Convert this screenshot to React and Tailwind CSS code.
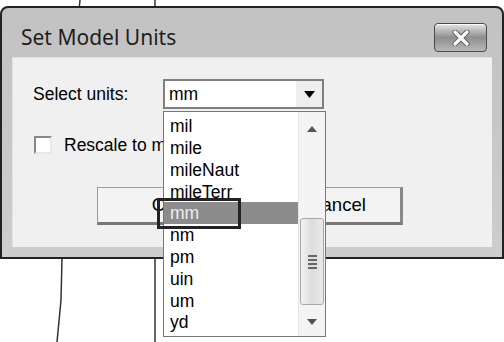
import React from 'react';

const units = ['mil', 'mile', 'mileNaut', 'mileTerr', 'mm', 'nm', 'pm', 'uin', 'um', 'yd'];

const CloseButton = () => (
  <button
    type="button"
    className="mr-[15px] mt-[15px] flex h-[29px] w-[53px] items-center justify-center rounded-[4px] border border-[#4a4a4a] bg-gradient-to-b from-[#e6e6e6] via-[#8e8e8e] to-[#b8b8b8] shadow-[inset_0_1px_0_#fff]"
  >
    <svg width="20" height="16" viewBox="0 0 20 16">
      <path d="M4 2 L16 14 M16 2 L4 14" stroke="#555" strokeWidth="5" strokeLinecap="round" />
      <path d="M4 2 L16 14 M16 2 L4 14" stroke="#fff" strokeWidth="3.2" strokeLinecap="round" />
    </svg>
  </button>
);

const DropList = () => (
  <div className="absolute left-[163px] top-[111px] flex h-[226px] w-[163px] border border-[#777] bg-white font-['Liberation_Sans',sans-serif] text-[17.5px] text-black">
    <ul className="w-[134px] pt-[3px]">
      {units.map(u => (
        <li
          key={u}
          className={
            u === 'mm'
              ? 'flex h-[21.8px] items-center bg-[#8c8c8c] pl-[6px] pt-[2px] leading-none text-[#eee]'
              : 'flex h-[21.8px] items-center pl-[6px] pt-[2px] leading-none'
          }
        >
          {u}
        </li>
      ))}
    </ul>
    <div className="flex w-[27px] flex-col border-l border-[#e4e4e4] bg-[#f4f4f4]">
      <div className="flex h-[30px] items-center justify-center pt-[4px]">
        <svg width="10" height="6" viewBox="0 0 10 6">
          <path d="M0 6 L5 0 L10 6 Z" fill="#555" />
        </svg>
      </div>
      <div className="h-[76px]" />
      <div className="mx-[1px] flex h-[87px] flex-col items-center justify-center gap-[2px] rounded-[3px] border border-[#a8a8a8] bg-gradient-to-r from-[#f2f2f2] via-[#dcdcdc] to-[#eaeaea]">
        <span className="h-[2px] w-[9px] bg-[#666]" />
        <span className="h-[2px] w-[9px] bg-[#666]" />
        <span className="h-[2px] w-[9px] bg-[#666]" />
        <span className="h-[2px] w-[9px] bg-[#666]" />
      </div>
      <div className="flex flex-1 items-center justify-center pt-[3px]">
        <svg width="10" height="6" viewBox="0 0 10 6">
          <path d="M0 0 L10 0 L5 6 Z" fill="#555" />
        </svg>
      </div>
    </div>
  </div>
);

export default function App() {
  return (
    <div className="relative h-[342px] w-[504px] overflow-hidden bg-white">
      <svg className="absolute inset-0" width="504" height="342">
        <path d="M80 0 L74 60 L62 258 L61 300 L57 342" stroke="#333" strokeWidth="1.5" fill="none" />
        <path d="M155 0 L155 342" stroke="#333" strokeWidth="1.5" />
      </svg>

      <div className="relative mt-[6px] h-[253px] w-[504px] rounded-t-[8px] border-2 border-[#222] bg-gradient-to-b from-[#c2c2c2] to-[#cdcdcd]">
        <div className="flex h-[49px] items-start justify-between">
          <h1 className="pl-[19px] pt-[19px] font-['Noto_Sans',sans-serif] text-[21px] leading-none text-[#1e1e1e]">
            Set Model Units
          </h1>
          <CloseButton />
        </div>

        <div className="mx-[10px] h-[190px] border-l border-t border-[#e2e2e2] bg-[#f0f0f0] pl-[20px] pt-[21px] font-['Liberation_Sans',sans-serif] text-[17.5px] text-black">
          <div className="flex h-[30px] items-center">
            <span className="w-[130px]">Select units:</span>
            <div className="flex h-[30px] w-[161px] items-center border-2 border-[#808080] bg-white">
              <span className="flex-1 pl-[4px]">mm</span>
              <span className="flex h-[26px] w-[26px] items-center justify-center bg-[#eeeeee]">
                <svg width="11" height="7" viewBox="0 0 11 7">
                  <path d="M0 0 L11 0 L5.5 7 Z" fill="#000" />
                </svg>
              </span>
            </div>
          </div>

          <div className="mt-[27px] flex h-[18px] items-center gap-[12px] pl-px">
            <span className="h-[18px] w-[18px] shrink-0 border-2 border-b-[#e8e8e8] border-l-[#888] border-r-[#e8e8e8] border-t-[#888] bg-white" />
            <span className="whitespace-nowrap">Rescale to model</span>
          </div>

          <div className="ml-[64px] mt-[33px] flex gap-[30px]">
            <button
              type="button"
              className="h-[38px] w-[138px] border border-b-[3px] border-r-[3px] border-[#9a9a9a] border-b-[#777] border-r-[#888] bg-[#f3f3f3] text-[18.5px]"
            >
              OK
            </button>
            <button
              type="button"
              className="h-[38px] w-[138px] border border-b-[3px] border-r-[3px] border-[#9a9a9a] border-b-[#777] border-r-[#888] bg-[#f3f3f3] pl-[8px] text-[18.5px]"
            >
              Cancel
            </button>
          </div>
        </div>
      </div>

      <DropList />
      <div className="absolute left-[157px] top-[198px] h-[31px] w-[84px] border-[3px] border-[#222]" />
    </div>
  );
}
